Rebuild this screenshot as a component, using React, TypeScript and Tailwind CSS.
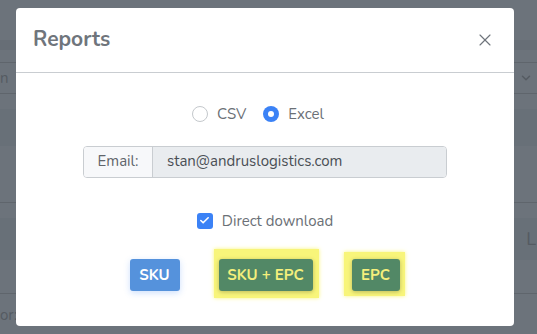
import { X, ChevronDown, Check } from "lucide-react";

const FONT = { fontFamily: "Nunito, Lato, 'Noto Sans', sans-serif" };

function Backdrop() {
  return (
    <div className="flex h-full flex-col bg-[#6c737b] text-[15px] text-[#555b62]">
      <div className="h-[40px]" />
      <div className="h-[10px] bg-[#676e76]" />
      <div className="h-[13px] border-b border-[#5f656c]" />
      <div className="flex h-[31px] items-center justify-between border-b border-[#5f656c] pr-[4px]">
        <span>n</span>
        <ChevronDown size={14} strokeWidth={2.5} className="text-[#555b62]" />
      </div>
      <div className="h-[15px]" />
      <div className="h-[37px] bg-[#687078]" />
      <div className="h-[57px] border-b border-[#5f656c]" />
      <div className="h-[15px]" />
      <div className="flex h-[42px] items-center justify-end bg-[#687078] pr-[1px] text-[18px]">
        <span>L</span>
      </div>
      <div className="h-[34px] border-b border-[#5f656c]" />
      <div className="flex h-[38px] items-center text-[15px]">
        <span className="pt-[5px]">or: Gold</span>
        <span className="ml-[155px] pt-[5px]">NTG TTTCC</span>
        <span className="ml-[104px] pt-[5px]">10</span>
        <span className="ml-[48px] pt-[5px]">1</span>
      </div>
    </div>
  );
}

function Radio({ checked, label }: { checked?: boolean; label: string }) {
  return (
    <label className="flex items-center gap-[9px]">
      {checked ? (
        <span className="flex h-[16px] w-[16px] items-center justify-center rounded-full bg-[#3b82f6]">
          <span className="h-[6px] w-[6px] rounded-full bg-white" />
        </span>
      ) : (
        <span className="h-[16px] w-[16px] rounded-full border border-[#c4c8cc] bg-white" />
      )}
      <span>{label}</span>
    </label>
  );
}

function Highlight({ children, className }: { children: React.ReactNode; className: string }) {
  return <div className={`bg-[#f8f57a] shadow-[0_0_4px_#f8f57a] ${className}`}>{children}</div>;
}

export default function App() {
  return (
    <div className="relative h-[334px] w-[537px] overflow-hidden" style={FONT}>
      <Backdrop />
      <div className="absolute left-[16px] top-[8px] flex h-[318px] w-[498px] flex-col rounded-[4px] bg-white text-[#6b7076]">
        <div className="flex h-[65px] items-center justify-between border-b border-[#c9cdd1] pl-[17px] pr-[19px]">
          <h2 className="text-[21px] font-bold text-[#6f757c]">Reports</h2>
          <X size={20} strokeWidth={1.4} className="text-[#6f757c]" />
        </div>

        <div className="flex flex-col items-center pt-[30px] text-[15px]">
          <div className="-ml-[14px] flex items-center gap-[17px]">
            <Radio label="CSV" />
            <Radio checked label="Excel" />
          </div>

          <div className="mt-[20px] flex h-[32px] w-[364px] overflow-hidden rounded-[4px] border border-[#c9cdd1]">
            <div className="flex w-[69px] items-center justify-center border-r border-[#c9cdd1] bg-[#f7f8fa] text-[#5f656b]">
              Email:
            </div>
            <div className="flex flex-1 items-center bg-[#e9ecef] pl-[14px] text-[#4a4f55]">
              stan@andruslogistics.com
            </div>
          </div>

          <div className="mt-[32px] flex items-center gap-[9px]">
            <span className="flex h-[16px] w-[16px] items-center justify-center rounded-[3px] bg-[#3b82f6]">
              <Check size={11} strokeWidth={3.5} className="text-white" />
            </span>
            <span>Direct download</span>
          </div>

          <div className="ml-[4px] mt-[17px] flex items-start text-[15px] font-bold">
            <button className="mt-[10px] h-[32px] w-[50px] rounded-[3px] bg-[#5592dc] text-white shadow-[0_2px_6px_rgba(59,130,246,0.25)]">
              SKU
            </button>
            <Highlight className="ml-[34px] pb-[7px] pl-[5px] pr-[6px] pt-[10px]">
              <button className="h-[32px] w-[94px] rounded-[3px] bg-[#528866] text-[#f4ef7c] shadow-[0_1px_4px_rgba(0,0,0,0.25)]">
                SKU + EPC
              </button>
            </Highlight>
            <Highlight className="ml-[25px] mt-[3px] pb-[5px] pl-[8px] pr-[5px] pt-[7px]">
              <button className="h-[32px] w-[48px] rounded-[3px] bg-[#528866] text-[#f4ef7c] shadow-[0_1px_4px_rgba(0,0,0,0.25)]">
                EPC
              </button>
            </Highlight>
          </div>
        </div>
      </div>
    </div>
  );
}
